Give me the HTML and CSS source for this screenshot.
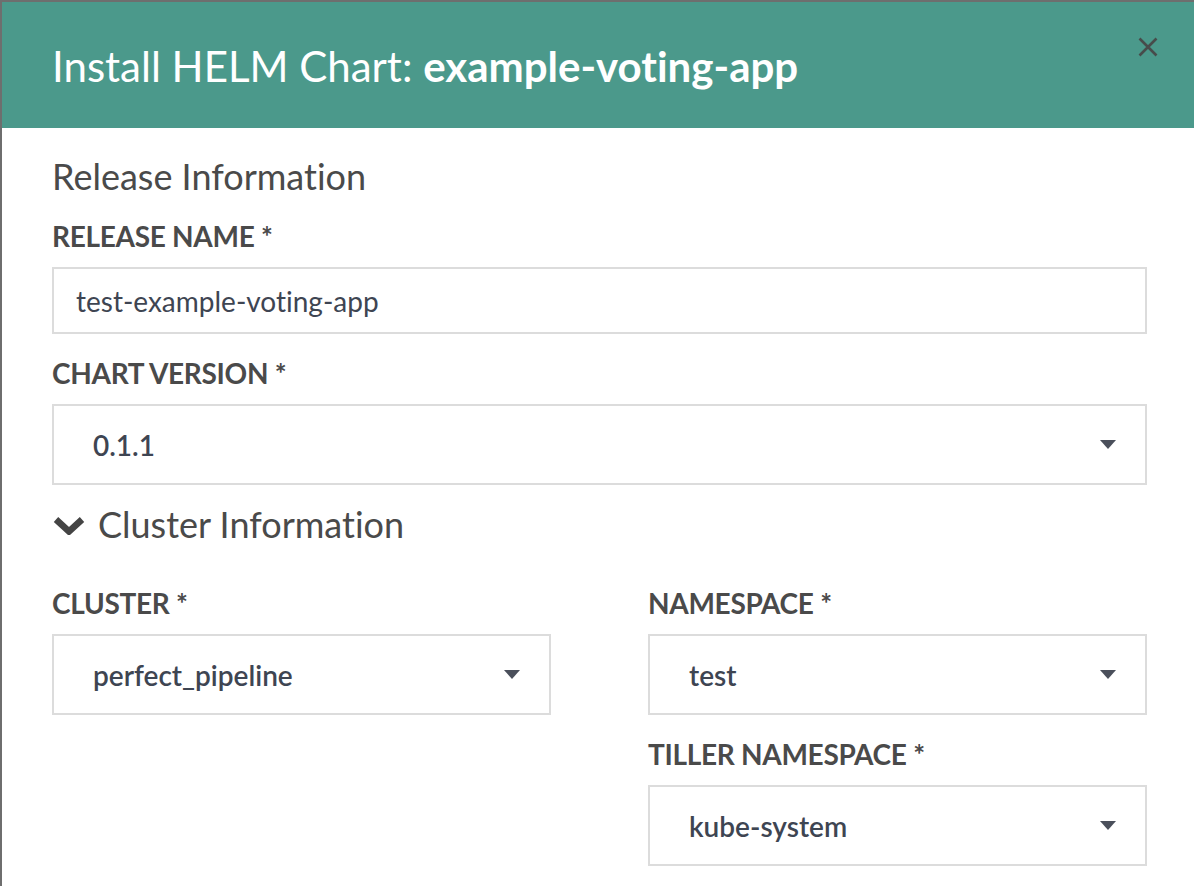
FILE: index.html
```html
<!DOCTYPE html>
<html lang="en">
<head>
<meta charset="utf-8">
<title>Install HELM Chart</title>
<link rel="stylesheet" href="styles.css">
</head>
<body>
<div class="modal">
  <div class="modal-header">
    <h1 class="title">Install HELM Chart: <strong>example-voting-app</strong></h1>
    <button class="close" type="button" aria-label="Close">
      <svg width="20" height="20" viewBox="0 0 20 20"><path d="M1.5 1.5 L18.5 18.5 M18.5 1.5 L1.5 18.5" stroke="#474c4b" stroke-width="2.6" fill="none"/></svg>
    </button>
  </div>
  <div class="modal-body">
    <h2 class="section">Release Information</h2>
    <div class="field first">
      <div class="label">RELEASE NAME *</div>
      <div class="input">test-example-voting-app</div>
    </div>
    <div class="field">
      <div class="label">CHART VERSION *</div>
      <div class="select"><span>0.1.1</span><i class="caret"></i></div>
    </div>
    <h2 class="section toggle">
      <svg class="chevron" width="34" height="20" viewBox="0 0 34 20"><path d="M4 4.5 L17 16.5 L30 4.5" stroke="#444" stroke-width="6.5" fill="none" stroke-linejoin="miter"/></svg>
      Cluster Information
    </h2>
    <div class="columns">
      <div class="col">
        <div class="field">
          <div class="label">CLUSTER *</div>
          <div class="select"><span>perfect_pipeline</span><i class="caret"></i></div>
        </div>
      </div>
      <div class="col">
        <div class="field">
          <div class="label">NAMESPACE *</div>
          <div class="select"><span>test</span><i class="caret"></i></div>
        </div>
        <div class="field">
          <div class="label">TILLER NAMESPACE *</div>
          <div class="select"><span>kube-system</span><i class="caret"></i></div>
        </div>
      </div>
    </div>
  </div>
</div>
</body>
</html>
```

FILE: styles.css
```css
html, body {
  margin: 0;
  height: 100%;
}
body {
  background: #6e6e6e;
  font-family: Lato, "Open Sans", "Liberation Sans", sans-serif;
  font-variant-ligatures: none;
  font-feature-settings: "liga" 0, "clig" 0, "dlig" 0;
  overflow: hidden;
}
.modal {
  margin: 2px 0 0 2px;
  background: #fff;
  min-height: 884px;
}
.modal-header {
  background: #4b998b;
  height: 126px;
  box-sizing: border-box;
  padding: 2px 36px 0 50px;
  display: flex;
  align-items: center;
  justify-content: space-between;
}
.title {
  margin: 0;
  font-size: 42px;
  font-weight: 400;
  line-height: 50px;
  color: #fff;
}
.title strong {
  font-weight: 700;
}
.close {
  align-self: flex-start;
  margin-top: 33px;
  width: 20px;
  height: 20px;
  padding: 0;
  border: 0;
  background: transparent;
  display: block;
}
.close svg {
  display: block;
}
.modal-body {
  padding: 30px 47px 0 50px;
}
.section {
  margin: 0;
  font-size: 36px;
  font-weight: 400;
  line-height: 36px;
  color: #4a4a4a;
}
.toggle {
  margin-top: 21px;
  display: flex;
  align-items: center;
  gap: 12px;
}
.chevron {
  display: block;
  margin-top: 2px;
}
.field {
  margin-top: 22px;
}
.field.first {
  margin-top: 25px;
}
.label {
  font-size: 28px;
  font-weight: 700;
  line-height: 34px;
  color: #4a4a4a;
  letter-spacing: -0.3px;
  margin-bottom: 14px;
}
.input {
  height: 67px;
  box-sizing: border-box;
  border: 2px solid #dcdcdc;
  padding: 0 22px;
  display: flex;
  align-items: center;
  font-size: 28px;
  color: #3e4552;
}
.select {
  height: 81px;
  box-sizing: border-box;
  border: 2px solid #dcdcdc;
  padding: 0 31px 0 39px;
  display: flex;
  align-items: center;
  justify-content: space-between;
  font-size: 28px;
  font-weight: 600;
  color: #3e4552;
}
.caret {
  width: 0;
  height: 0;
  border-left: 8px solid transparent;
  border-right: 8px solid transparent;
  border-top: 9px solid #4a4f5b;
  margin-right: -2px;
}
.columns {
  display: grid;
  grid-template-columns: 1fr 1fr;
  column-gap: 97px;
  margin-top: 22px;
}
.columns .col > .field:first-child {
  margin-top: 22px;
}
```
